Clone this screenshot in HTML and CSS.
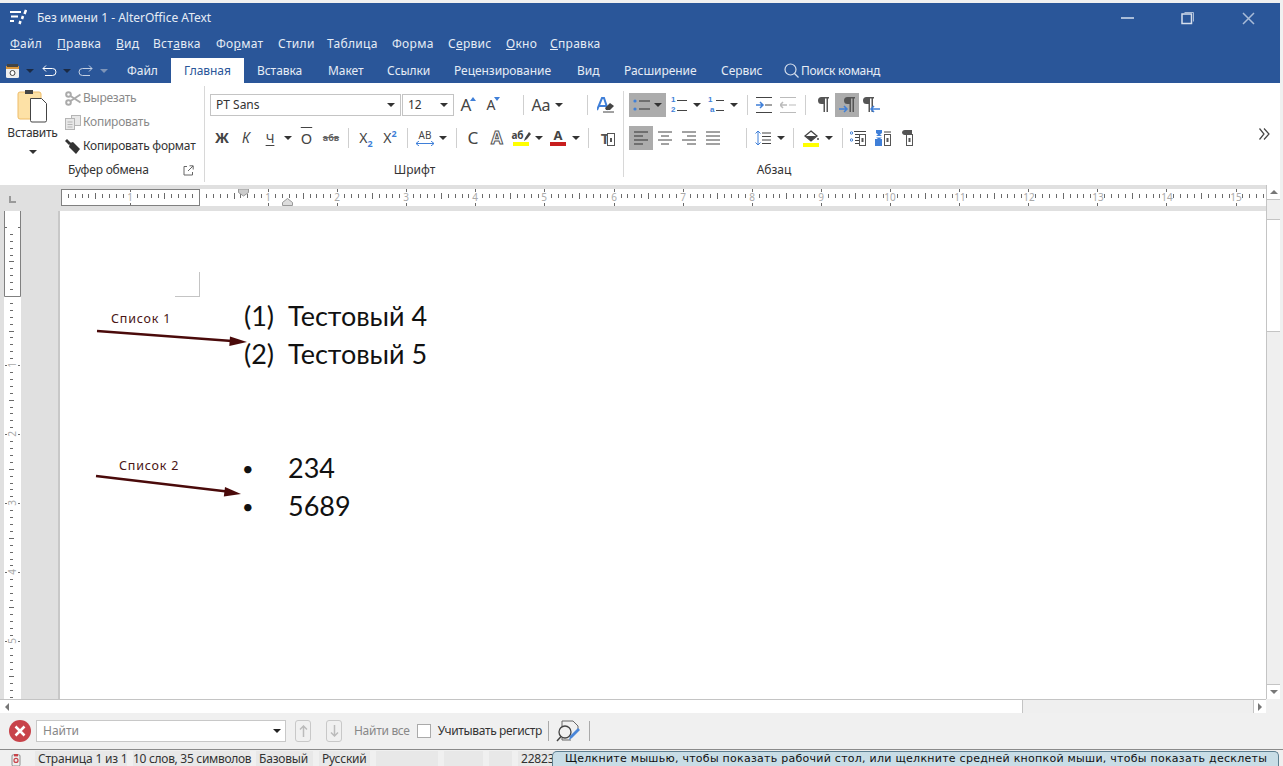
FILE: index.html
```html
<!DOCTYPE html>
<html lang="ru">
<head>
  <meta charset="UTF-8">
  <title>Без имени 1 - AlterOffice AText</title>
  <link rel="stylesheet" href="styles.css">
</head>
<body>
  <div class="titlebar">
    <svg class="logo" width="17" height="16" viewBox="0 0 17 16" fill="none" stroke="#fff" stroke-width="2">
      <path d="M0 3h11M1 7.500h7M0 12h4"/>
      <path d="M16 1l-1.500 4M13 7l-1 3M10.500 12l-1 3" stroke-width="2.500"/>
    </svg>
    <span class="doc-title">Без имени 1 - AlterOffice AText</span>
    <div class="win-buttons">
      <span class="win-btn"><svg width="14" height="4"><path d="M0 2h13" stroke="#a9bcd8" stroke-width="2"/></svg></span>
      <span class="win-btn"><svg width="14" height="14" fill="none" stroke="#d5deec"><rect x="1" y="3" width="9.500" height="9.500" stroke-width="1.500"/><path d="M3.500 1.500h9v9" stroke="#a9bcd8"/></svg></span>
      <span class="win-btn"><svg width="13" height="13" stroke="#a9bcd8" stroke-width="1.500"><path d="M1 1l11 11M12 1L1 12"/></svg></span>
    </div>
  </div>

  <div class="menubar">
    <span><u>Ф</u>айл</span>
    <span><u>П</u>равка</span>
    <span><u>В</u>ид</span>
    <span>Вст<u>а</u>вка</span>
    <span>Фо<u>р</u>мат</span>
    <span>Стили</span>
    <span>Таблица</span>
    <span>Форма</span>
    <span>С<u>е</u>рвис</span>
    <span><u>О</u>кно</span>
    <span><u>С</u>правка</span>
  </div>

  <div class="tabbar">
    <div class="quick">
      <svg width="13" height="14" viewBox="0 0 13 14"><rect x="0" y="2" width="13" height="12" rx="1.500" fill="#eee"/><rect x="0" y="2" width="13" height="3" fill="#d9963c"/><rect x="1" y="0" width="11" height="3" fill="#444"/><circle cx="6.500" cy="9" r="2.500" fill="#fff" stroke="#444"/></svg>
      <i class="caret dark"></i>
      <svg width="15" height="12" viewBox="0 0 15 12" fill="none" stroke="#fff"><path d="M1 3.500h9.500a3.500 3.500 0 0 1 0 7H3"/><path d="M4 .5l-3 3 3 3"/></svg>
      <i class="caret dark"></i>
      <svg width="15" height="12" viewBox="0 0 15 12" fill="none" stroke="#c3cfe2"><path d="M14 3.500H4.500a3.500 3.500 0 0 0 0 7H12"/><path d="M11 .5l3 3-3 3"/></svg>
      <i class="caret faded"></i>
    </div>
    <div class="tabs">
      <span class="tab">Файл</span>
      <span class="tab active">Главная</span>
      <span class="tab">Вставка</span>
      <span class="tab">Макет</span>
      <span class="tab">Ссылки</span>
      <span class="tab">Рецензирование</span>
      <span class="tab">Вид</span>
      <span class="tab">Расширение</span>
      <span class="tab">Сервис</span>
    </div>
    <div class="cmd-search">
      <svg width="15" height="15" viewBox="0 0 15 15" fill="none" stroke="#d5deec" stroke-width="1.200"><circle cx="6.500" cy="6.500" r="5.500"/><path d="M10.500 10.500l4 4"/></svg>
      <span>Поиск команд</span>
    </div>
  </div>

  <div class="ribbon">
    <section class="group clipboard">
      <div class="clip-tools">
        <div class="paste">
          <svg width="31" height="33" viewBox="0 0 31 33">
            <rect x="1" y="2" width="23" height="27" rx="2" fill="#fde1a6" stroke="#eebc68"/>
            <rect x="8" y="0" width="8" height="4" fill="#444"/>
            <path d="M13.500 8.500h11l5 5v17a1.500 1.500 0 0 1-1.500 1.500H15a1.500 1.500 0 0 1-1.500-1.500z" fill="#fff" stroke="#444"/>
          </svg>
          <span>Вставить</span>
          <i class="caret dark-on-light"></i>
        </div>
        <div class="clip-actions">
          <div class="clip-action off">
            <svg width="16" height="15" viewBox="0 0 16 15" fill="none" stroke="#aaa" stroke-width="2"><circle cx="3.500" cy="3.500" r="2.300"/><circle cx="3.500" cy="11.500" r="2.300"/><path d="M5.500 5l10 6.500M5.500 10l10-6.500"/></svg>
            <span>Вырезать</span>
          </div>
          <div class="clip-action off">
            <svg width="16" height="15" viewBox="0 0 16 15" fill="#e8e8e8" stroke="#b5b5b5"><rect x="6.500" y=".5" width="9" height="10"/><rect x=".5" y="3.500" width="9" height="11"/><path d="M2.500 7h5M2.500 9.500h5M2.500 12h5" fill="none"/></svg>
            <span>Копировать</span>
          </div>
          <div class="clip-action">
            <svg width="16" height="15" viewBox="0 0 16 15" fill="#333"><path d="M0 2l2-2 4 4-2 2z"/><path d="M5 4l3-1 7 7-4 5-7-7z"/></svg>
            <span>Копировать формат</span>
          </div>
        </div>
      </div>
      <div class="group-label clip-label">
        <span>Буфер обмена</span>
        <svg width="11" height="11" viewBox="0 0 11 11" fill="none" stroke="#666"><path d="M4 1.500H1v8.500h8.500V7"/><path d="M5 6l5-5M6.500 .8h3.700v3.700"/></svg>
      </div>
    </section>

    <section class="group font-group">
      <div class="row font-row-1">
        <div class="select"><span>PT Sans</span><i class="caret dark-on-light"></i></div>
        <div class="select size"><span>12</span><i class="caret dark-on-light"></i></div>
        <span class="glyph big">A<svg class="corner" width="6" height="4"><path d="M3 0l3 4H0z" fill="#3f7fd8"/></svg></span>
        <span class="glyph mid">A<svg class="corner" width="6" height="4"><path d="M3 4l3-4H0z" fill="#3f7fd8"/></svg></span>
        <span></span>
        <i class="sep"></i>
        <span class="glyph aa">Aa</span>
        <i class="caret dark-on-light"></i>
        <span></span>
        <i class="sep"></i>
        <svg width="17" height="16" viewBox="0 0 17 16"><path d="M0 13L5 1h2l4 12M2 9h7" fill="none" stroke="#3f7fd8" stroke-width="2"/><path d="M8 11l5-5 4 3-4 4H9z" fill="#444"/><path d="M6 15h11" stroke="#444"/></svg>
      </div>
      <div class="row font-row-2">
        <b class="glyph zh">Ж</b>
        <span class="glyph ital">К</span>
        <span class="glyph under">Ч</span>
        <i class="caret dark-on-light"></i>
        <span class="glyph over">О</span>
        <span class="glyph strike">абв</span>
        <i class="sep"></i>
        <span class="glyph xs">X<sub>2</sub></span>
        <span class="glyph xs">X<sup>2</sup></span>
        <i class="sep"></i>
        <span class="glyph ab-arrow">АВ<svg width="18" height="5" viewBox="0 0 18 5" fill="none" stroke="#3f7fd8"><path d="M0 2.500h18M3 0L0 2.500 3 5M15 0l3 2.500L15 5"/></svg></span>
        <i class="caret dark-on-light"></i>
        <i class="sep"></i>
        <span class="glyph big-c">С</span>
        <span class="glyph outline">A</span>
        <span class="glyph paint"><span class="paint-top">аб<svg width="7" height="9" viewBox="0 0 7 9"><path d="M0 9l1-3 4-6 2 2-4 5z" fill="#444"/></svg></span><i class="bar yellow"></i></span>
        <i class="caret dark-on-light"></i>
        <span class="glyph paint strong">A<i class="bar red"></i></span>
        <i class="caret dark-on-light"></i>
        <i class="sep"></i>
        <span class="glyph tc">T<svg width="8" height="13" viewBox="0 0 8 13" fill="#fff" stroke="#555"><rect x=".5" y=".5" width="7" height="12"/><rect x="3" y="5" width="2" height="4" fill="#555" stroke="none"/></svg></span>
      </div>
      <div class="group-label">Шрифт</div>
    </section>

    <section class="group para-group">
      <div class="row para-row-1">
        <div class="toggle on list-btn">
          <svg width="17" height="12" viewBox="0 0 17 12"><circle cx="2" cy="2" r="1.600" fill="#3f7fd8"/><circle cx="2" cy="10" r="1.600" fill="#3f7fd8"/><path d="M6 2h11M6 10h11" stroke="#333"/></svg>
          <i class="caret dark-on-light"></i>
        </div>
        <span class="numlist"><b>1</b><i></i><b>2</b><i></i></span>
        <i class="caret dark-on-light"></i>
        <span class="numlist multi"><b>1</b><i></i><b class="sub-level">a</b><i></i></span>
        <i class="caret dark-on-light"></i>
        <i class="sep"></i>
        <svg width="16" height="16" viewBox="0 0 16 16"><path d="M0 .5h16M9 8h7M0 15.500h16" stroke="#444"/><path d="M0 8h7M4 5l3 3-3 3" fill="none" stroke="#3f7fd8" stroke-width="1.500"/></svg>
        <span></span>
        <svg width="16" height="16" viewBox="0 0 16 16"><path d="M0 .5h16M9 8h7M0 15.500h16" stroke="#bbb"/><path d="M7 8H0M3 5L0 8l3 3" fill="none" stroke="#bbb" stroke-width="1.500"/></svg>
        <i class="sep"></i>
        <svg width="12" height="16" viewBox="0 0 12 16"><use href="#pilcrow"/></svg>
        <div class="toggle on">
          <svg width="17" height="16" viewBox="0 0 17 16"><use href="#pilcrow" x="5"/><path d="M0 12h8M5 9l3 3-3 3" fill="none" stroke="#3f7fd8" stroke-width="1.500"/></svg>
        </div>
        <svg width="17" height="16" viewBox="0 0 17 16"><use href="#pilcrow"/><path d="M17 12H8M11 9l-3 3 3 3" fill="none" stroke="#3f7fd8" stroke-width="1.500"/></svg>
      </div>
      <div class="row para-row-2">
        <div class="toggle on"><svg width="14" height="14" viewBox="0 0 14 14" stroke="#333"><path d="M0 1h14M0 5h9M0 9h14M0 13h9"/></svg></div>
        <svg width="14" height="14" viewBox="0 0 14 14" stroke="#444"><path d="M0 1h14M3 5h8M0 9h14M3 13h8"/></svg>
        <svg width="14" height="14" viewBox="0 0 14 14" stroke="#444"><path d="M0 1h14M5 5h9M0 9h14M5 13h9"/></svg>
        <svg width="14" height="14" viewBox="0 0 14 14" stroke="#444"><path d="M0 1h14M0 5h14M0 9h14M0 13h14"/></svg>
        <span></span>
        <i class="sep"></i>
        <svg width="16" height="16" viewBox="0 0 16 16" fill="none"><path d="M3 1v14M.5 3.500L3 1l2.500 2.500M.5 12.500L3 15l2.500-2.500" stroke="#3f7fd8"/><path d="M7 3h9M7 6.500h9M7 10h9M7 13.500h9" stroke="#444"/></svg>
        <i class="caret dark-on-light"></i>
        <i class="sep"></i>
        <span class="fill-icon">
          <svg width="16" height="12" viewBox="0 0 16 12"><path d="M8 1l6 5-6 5-6-5z" fill="#fff" stroke="#444" stroke-width="1.300"/><path d="M2.500 6h11L8 11z" fill="#444"/><circle cx="15" cy="9" r="1" fill="#444"/></svg>
          <i class="bar yellow"></i>
        </span>
        <i class="caret dark-on-light"></i>
        <i class="sep"></i>
        <svg width="16" height="15" viewBox="0 0 16 15"><circle cx="1.500" cy="2" r="1.200" fill="none" stroke="#3f7fd8"/><circle cx="1.500" cy="9" r="1.200" fill="none" stroke="#3f7fd8"/><path d="M4 .5h12M5 3.500h11M5 6.500h5M5 9.500h5M5 12.500h5" stroke="#444"/><use href="#minidoc" x="9" y="3"/></svg>
        <svg width="16" height="16" viewBox="0 0 16 16"><path d="M1 0h6v3L5 4.500 7 6H1l2-1.500L1 3zM0 9h7v7H0z" fill="#3f7fd8"/><path d="M1 7.500h6L5 9H3z" fill="#3f7fd8"/><path d="M9 2h7" stroke="#444"/><use href="#minidoc" x="9" y="4"/></svg>
        <svg width="12" height="16" viewBox="0 0 12 16"><path d="M0 3a3 3 0 0 1 3-3h7v5H3a3 3 0 0 1-3-2z" fill="#555"/><use href="#minidoc" x="4" y="4"/></svg>
      </div>
      <div class="group-label">Абзац</div>
    </section>

    <svg class="more" width="11" height="12" viewBox="0 0 11 12" fill="none" stroke="#444" stroke-width="1.200"><path d="M.5 .5L5 6 .5 11.500M5 .5L10 6l-5 5.500"/></svg>
  </div>

  <svg class="defs" width="0" height="0">
    <defs>
      <path id="pilcrow" d="M0 3.500A3.500 3.500 0 0 1 3.500 0H11v1.500h-1V15H8.500V1.500H7V15H5.500V7H3.500A3.500 3.500 0 0 1 0 3.500z" fill="#555"/>
      <g id="minidoc"><rect x=".5" y=".5" width="6" height="11" fill="#fff" stroke="#555"/><rect x="2.500" y="4" width="2" height="4" fill="#555"/></g>
    </defs>
  </svg>

  <div class="workspace">
    <div class="work-main">
      <div class="h-ruler-row">
        <div class="corner-box"><svg width="7" height="7"><path d="M1 0v6h6" fill="none" stroke="#9a9a9a" stroke-width="2"/></svg></div>
        <svg class="h-ruler" width="1205" height="17" viewBox="0 0 1205 17">
          <rect width="1205" height="17" fill="#fff"/>
          <path id="h-ticks" class="ticks"/>
          <rect x=".5" y=".5" width="138" height="16" fill="none" stroke="#808080"/>
          <g class="ruler-num">
            <text x="69" y="12">1</text><text x="207" y="12">1</text><text x="276" y="12">2</text><text x="345" y="12">3</text>
            <text x="414" y="12">4</text><text x="483" y="12">5</text><text x="553" y="12">6</text><text x="622" y="12">7</text>
            <text x="691" y="12">8</text><text x="760" y="12">9</text><text x="829" y="12">10</text><text x="899" y="12">11</text>
            <text x="968" y="12">12</text><text x="1037" y="12">13</text><text x="1106" y="12">14</text><text x="1175" y="12">15</text>
          </g>
          <path d="M177.500 0h10v3.500l-5 3.500-5-3.500z" fill="#ccc" stroke="#999"/>
          <path d="M221.500 16.500v-3l5-4 5 4v3z" fill="#ddd" stroke="#999"/>
        </svg>
      </div>
      <div class="doc-area">
        <div class="v-ruler-col">
          <svg width="17" height="488" viewBox="0 0 17 488">
            <rect width="17" height="488" fill="#fff"/>
            <path id="v-ticks" class="ticks"/>
            <path d="M.5 0v85.500h16V0" fill="none" stroke="#808080"/>
            <g class="ruler-num">
              <text transform="translate(12 154) rotate(-90)">1</text>
              <text transform="translate(12 223) rotate(-90)">2</text>
              <text transform="translate(12 292) rotate(-90)">3</text>
              <text transform="translate(12 361) rotate(-90)">4</text>
              <text transform="translate(12 430) rotate(-90)">5</text>
            </g>
          </svg>
        </div>
        <div class="page">
          <div class="margin-mark"></div>
          <svg class="arrows" width="200" height="300" viewBox="0 0 200 300">
            <path d="M37 120l135 10" stroke="#4a0a0a" stroke-width="2.500"/>
            <path d="M187 131l-17-5.500-.7 9.500z" fill="#4a0a0a"/>
            <path d="M36 265l131 15.500" stroke="#4a0a0a" stroke-width="2.500"/>
            <path d="M181 283l-16-7-1.200 9.500z" fill="#4a0a0a"/>
          </svg>
          <span class="note note-1">Список 1</span>
          <span class="note note-2">Список 2</span>
          <ul class="doc-list first">
            <li><span>(1)</span>Тестовый 4</li>
            <li><span>(2)</span>Тестовый 5</li>
          </ul>
          <ul class="doc-list">
            <li><span class="bullet">•</span>234</li>
            <li><span class="bullet">•</span>5689</li>
          </ul>
        </div>
      </div>
    </div>
    <div class="v-scroll">
      <div class="sb-btn"><i class="caret up"></i></div>
      <div class="sb-track short"></div>
      <div class="sb-thumb"></div>
      <div class="sb-track"></div>
      <div class="sb-btn"><i class="caret down"></i></div>
    </div>
  </div>

  <div class="h-scroll">
    <div class="hs-btn"><i class="tri left"></i></div>
    <div class="hs-thumb"></div>
    <div class="hs-track"></div>
    <div class="hs-btn end"><i class="tri right"></i></div>
  </div>

  <div class="findbar">
    <svg width="22" height="22" viewBox="0 0 22 22"><circle cx="11" cy="11" r="11" fill="#c8434a"/><path d="M6.500 6.500l9 9M15.500 6.500l-9 9" stroke="#fff" stroke-width="2.500"/></svg>
    <div class="find-input"><span>Найти</span><i class="caret dark-on-light"></i></div>
    <div class="find-arrow"><svg width="9" height="12" viewBox="0 0 9 12" fill="none" stroke="#bbb" stroke-width="1.500"><path d="M4.500 12V1M1 4.500L4.500 1 8 4.500"/></svg></div>
    <div class="find-arrow"><svg width="9" height="12" viewBox="0 0 9 12" fill="none" stroke="#bbb" stroke-width="1.500"><path d="M4.500 0v11M1 7.500L4.500 11 8 7.500"/></svg></div>
    <span class="find-all">Найти все</span>
    <span class="checkbox"></span>
    <span class="match-case">Учитывать регистр</span>
    <i class="find-sep"></i>
    <svg class="find-tool" width="25" height="24" viewBox="0 0 25 24" fill="none"><path d="M6 8V2h11l5 5v3M6 19v2h9" stroke="#666"/><circle cx="9" cy="13" r="6" stroke="#444" stroke-width="1.300"/><path d="M5 17.500L1 22" stroke="#444" stroke-width="1.500"/><path d="M13 21l1-4 8-8 2 2-8 8z" fill="#4a86d8"/></svg>
    <i class="find-sep"></i>
  </div>

  <div class="statusbar">
    <span class="st-icon"><svg width="10" height="12" viewBox="0 0 11 15"><rect x=".5" y="1" width="10" height="14" rx="1.500" fill="#eee" stroke="#777"/><rect x="3" y="0" width="5" height="3" fill="#c8434a"/><circle cx="5.500" cy="8" r="2.500" fill="none" stroke="#c8434a" stroke-width="1.500"/></svg></span>
    <span class="cell page-no">Страница 1 из 1</span>
    <span class="cell words">10 слов, 35 символов</span>
    <span class="cell style-name">Базовый</span>
    <span class="cell lang">Русский</span>
    <span class="cell empty-a"></span>
    <span class="cell empty-b"></span>
    <span class="cell empty-c"></span>
    <span class="cell number">22823</span>
    <div class="tooltip">Щелкните мышью, чтобы показать рабочий стол, или щелкните средней кнопкой мыши, чтобы показать десклеты</div>
  </div>

  <script src="ruler.js"></script>
</body>
</html>
```

FILE: styles.css
```css
* {
  box-sizing: border-box;
}

html, body {
  height: 100%;
}

body {
  margin: 0;
  padding-top: 3px;
  width: 1283px;
  height: 766px;
  overflow: hidden;
  background: #f0f0f0;
  color: #333;
  font-family: "Noto Sans", sans-serif;
  font-size: 12px;
  line-height: 16px;
  display: flex;
  flex-direction: column;
}

i { font-style: normal; }
svg { display: block; flex: none; }
.defs { position: absolute; }

/* blue window chrome */
.titlebar {
  width: 1280px;
  height: 30px;
  flex: none;
  background: #2a5699;
  color: #e6ecf5;
  display: flex;
  align-items: center;
  padding: 0 2px 0 10px;
}

.doc-title { margin-left: 10px; }
.logo { margin-top: -2px; }

.win-buttons {
  margin-left: auto;
  display: flex;
  align-self: stretch;
}

.win-btn {
  width: 60px;
  display: flex;
  justify-content: center;
  align-items: center;
}

.menubar {
  width: 1280px;
  height: 25px;
  flex: none;
  background: #2a5699;
  color: #e6ecf5;
  padding: 3px 0 0 10px;
  display: grid;
  grid-template-columns: 47px 59px 37px 63px 62px 49px 65px 56px 58px 44px auto;
  letter-spacing: .3px;
}

.tabbar {
  width: 1280px;
  height: 25px;
  flex: none;
  background: #2a5699;
  color: #e6ecf5;
  display: flex;
}

.quick {
  display: grid;
  grid-template-columns: 24px 12px 26px 10px 26px 12px;
  width: 114px;
  justify-items: center;
  align-items: center;
}

.tabs {
  display: grid;
  grid-template-columns: 57px 73px 71px 59px 67px 123px 47px 97px 63px;
}

.tab {
  padding-left: 13px;
  line-height: 25px;
  letter-spacing: -.05px;
}

.tab.active {
  background: #fff;
  color: #2a5699;
}

.cmd-search {
  margin-left: 13px;
  display: flex;
  align-items: center;
  gap: 2px;
  letter-spacing: -.3px;
}

/* carets */
.caret {
  width: 0;
  height: 0;
  border-left: 4px solid transparent;
  border-right: 4px solid transparent;
  border-top: 4px solid #333;
}

.caret.dark { border-top-color: #1b2a44; }
.caret.faded { border-top-color: #7d94b8; }

/* ribbon */
.ribbon {
  width: 1280px;
  height: 102px;
  flex: none;
  background: #fff;
  display: flex;
}

.group {
  position: relative;
  display: flex;
  flex-direction: column;
}

.group-label {
  margin-top: auto;
  height: 22px;
  text-align: center;
  line-height: 22px;
}

.clipboard {
  width: 205px;
  border-right: 1px solid #d8d8d8;
  margin: 3px 0;
}

.clip-tools {
  display: flex;
}

.paste {
  width: 65px;
  display: flex;
  flex-direction: column;
  align-items: center;
  padding-top: 4px;
  letter-spacing: -.25px;
}

.paste span { margin-top: 2px; }
.paste .caret { margin-top: 9px; }

.clip-action {
  height: 24px;
  display: flex;
  align-items: center;
  gap: 2px;
  white-space: nowrap;
  letter-spacing: -.25px;
}

.clip-action.off { color: #8a8a8a; }

.clip-label {
  display: flex;
  justify-content: space-between;
  align-items: center;
  height: 27px;
  padding: 0 10px 0 68px;
  letter-spacing: -.2px;
}

.font-group {
  width: 419px;
  padding: 10px 0 0 5px;
}

.font-group::after {
  content: "";
  position: absolute;
  right: 0;
  top: 8px;
  bottom: 8px;
  width: 1px;
  background: #d8d8d8;
}

.para-group {
  width: 300px;
  padding: 10px 0 0 5px;
}

.font-group .group-label,
.para-group .group-label {
  margin-left: -5px;
  margin-bottom: 4px;
}

.row {
  display: grid;
  height: 24px;
  justify-items: center;
  align-items: center;
  color: #444;
}

.font-row-1 { grid-template-columns: 191px 53px 24px 26px 15px 8px 28px 8px 20px 8px 28px; }
.font-row-2 {
  margin-top: 9px;
  grid-template-columns: 24px 24px 24px 12px 25px 24px 10px 26px 22px 12px 24px 12px 14px 20px 28px 20px 16px 22px 14px 10px 30px;
}
.para-row-1 { grid-template-columns: 37px 26px 10px 28px 8px 18px 16px 7px 18px 16px 22px 24px 24px; }
.para-row-2 {
  margin-top: 9px;
  grid-template-columns: 24px 24px 24px 24px 17px 8px 26px 10px 14px 22px 14px 12px 20px 30px 20px;
}

.sep {
  width: 1px;
  height: 20px;
  background: #cfcfcf;
}

.select {
  width: 100%;
  height: 22px;
  border: 1px solid #c4c4c4;
  display: flex;
  align-items: center;
  justify-content: space-between;
  padding: 0 5px;
  color: #333;
}

.select.size { margin-left: 1px; width: 52px; }

.toggle {
  width: 24px;
  height: 24px;
  display: flex;
  align-items: center;
  justify-content: center;
}

.toggle.on { background: #acacac; }
.list-btn { width: 37px; gap: 4px; }

.numlist {
  width: 16px;
  display: grid;
  grid-template-columns: 6px 10px;
  grid-auto-rows: 10px;
  align-items: center;
  font-family: "Liberation Sans", sans-serif;
  font-size: 8px;
  line-height: 10px;
  color: #3f7fd8;
}

.numlist b { font-weight: bold; }
.numlist i { height: 1px; background: #444; }
.numlist.multi i { margin-left: 2px; }
.sub-level { padding-left: 2px; }

.glyph {
  position: relative;
  font-size: 13px;
  line-height: 20px;
}

.glyph sub, .glyph sup {
  font-size: 9px;
  color: #3f7fd8;
  font-weight: bold;
  line-height: 0;
}

.glyph.big { font-size: 17px; }
.glyph.mid { font-size: 14px; }
.glyph.aa { font-size: 16px; }
.glyph.big-c { font-size: 17px; }
.glyph.zh { font-size: 14px; }
.glyph.ital { font-style: italic; font-size: 14px; }
.glyph.xs { font-size: 14px; }

.corner {
  position: absolute;
  top: 2px;
  right: -5px;
}

.under { text-decoration: underline; text-underline-offset: 2px; }
.over { text-decoration: overline; font-size: 15px; }
.strike { text-decoration: line-through; font-size: 9px; font-weight: bold; color: #666; }

.ab-arrow {
  font-size: 10px;
  line-height: 11px;
  display: flex;
  flex-direction: column;
  align-items: center;
}

.outline {
  font-size: 17px;
  color: #fff;
  font-weight: bold;
  -webkit-text-stroke: 1px #555;
}

.paint {
  font-size: 10px;
  font-weight: bold;
  line-height: 11px;
  display: flex;
  flex-direction: column;
  align-items: center;
  width: 16px;
}

.paint-top {
  display: flex;
  align-items: flex-end;
}

.paint.strong { font-size: 13px; }

.bar {
  display: block;
  width: 16px;
  height: 4px;
  margin-top: 1px;
}

.bar.yellow { background: #ffff00; }
.bar.red { background: #c81e1e; }

.fill-icon {
  display: flex;
  flex-direction: column;
  align-items: center;
}

.tc {
  display: flex;
  align-items: flex-end;
  font-size: 15px;
  font-weight: bold;
  color: #555;
  line-height: 16px;
}

.tc svg { margin-left: -2px; }

.more {
  margin: 45px 0 0 335px;
}

/* ruler + page */
.workspace {
  width: 1280px;
  height: 514px;
  flex: none;
  display: flex;
}

.work-main {
  width: 1266px;
  display: flex;
  flex-direction: column;
}

.h-ruler-row {
  height: 26px;
  flex: none;
  padding-top: 4px;
  background: #e0e0e0;
  display: flex;
}

.corner-box {
  width: 61px;
  padding: 7px 0 0 9px;
}

.ticks {
  fill: none;
  stroke: #6a6a6a;
  shape-rendering: crispEdges;
}

.ruler-num text {
  font-size: 10px;
  fill: #aaa;
  text-anchor: middle;
}

.doc-area {
  flex: 1;
  display: flex;
  min-height: 0;
}

.v-ruler-col {
  width: 60px;
  flex: none;
  padding-left: 4px;
  background: #e0e0e0;
  border-right: 2px solid #c8c8c8;
}

.page {
  flex: 1;
  position: relative;
  background: #fff;
  padding: 86px 0 0 184px;
  font-family: "Lato", "Noto Sans", sans-serif;
  font-size: 27px;
  line-height: 38px;
  color: #111;
}

.margin-mark {
  position: absolute;
  left: 115px;
  top: 61px;
  width: 25px;
  height: 25px;
  border-right: 1px solid #c4c4c4;
  border-bottom: 1px solid #c4c4c4;
}

.arrows {
  position: absolute;
  left: 0;
  top: 0;
}

.note {
  position: absolute;
  font-family: "Noto Sans", sans-serif;
  font-size: 12.500px;
  line-height: 16px;
  letter-spacing: .8px;
  color: #4a1515;
}

.note-1 { left: 51px; top: 100px; }
.note-2 { left: 59px; top: 247px; }

.doc-list {
  list-style: none;
  margin: 0 0 76px;
  padding: 0;
}

.doc-list li {
  display: flex;
  height: 38px;
}

.doc-list li span { width: 44px; }
.doc-list li .bullet { font-size: 20px; margin-left: -2px; margin-right: 2px; }

/* scrollbars */
.v-scroll {
  width: 14px;
  display: flex;
  flex-direction: column;
  border-left: 1px solid #c4c4c4;
}

.sb-btn {
  height: 14px;
  flex: none;
  background: #fff;
  display: flex;
  align-items: center;
  justify-content: center;
}

.caret.up {
  border-top: 0;
  border-bottom: 4px solid #777;
}

.caret.down { border-top-color: #777; }

.sb-track {
  flex: 1;
  background: #efefef;
  border-bottom: 1px solid #c4c4c4;
}

.sb-track.short {
  flex: none;
  height: 21px;
  border-top: 1px solid #c4c4c4;
}

.sb-thumb {
  height: 112px;
  flex: none;
  background: #fff;
  border-bottom: 1px solid #c4c4c4;
}

.h-scroll {
  width: 1266px;
  height: 14px;
  flex: none;
  display: flex;
  border-top: 1px solid #c4c4c4;
}

.hs-btn {
  width: 13px;
  flex: none;
  background: #fff;
  display: flex;
  align-items: center;
  justify-content: center;
}

.hs-thumb {
  width: 1009px;
  background: #fff;
}

.hs-track {
  flex: 1;
  background: #efefef;
  border-left: 1px solid #c4c4c4;
}

.hs-btn.end {
  border-left: 1px solid #c4c4c4;
}

.tri {
  width: 0;
  height: 0;
  border-top: 4px solid transparent;
  border-bottom: 4px solid transparent;
}

.tri.left { border-right: 4px solid #777; }
.tri.right { border-left: 4px solid #777; }

/* find toolbar */
.findbar {
  height: 36px;
  flex: none;
  display: flex;
  align-items: center;
  padding-left: 9px;
  color: #333;
}

.find-input {
  width: 250px;
  height: 22px;
  margin-left: 5px;
  background: #fff;
  border: 1px solid #c8c8c8;
  display: flex;
  align-items: center;
  justify-content: space-between;
  padding: 0 4px 0 6px;
  color: #888;
}

.find-input .caret { border-top-color: #222; }

.find-arrow {
  width: 16px;
  height: 22px;
  margin-left: 9px;
  border: 1px solid #c8c8c8;
  border-radius: 3px;
  display: flex;
  align-items: center;
  justify-content: center;
}

.find-arrow + .find-arrow { margin-left: 15px; }

.find-all {
  margin-left: 12px;
  color: #888;
  letter-spacing: -.3px;
}

.checkbox {
  width: 14px;
  height: 14px;
  margin-left: 7px;
  background: #fff;
  border: 1px solid #aaa;
}

.match-case {
  margin-left: 7px;
  letter-spacing: -.35px;
}

.find-sep {
  width: 1px;
  height: 20px;
  margin-left: 6px;
  background: #aaa;
}

.find-tool { margin-left: 7px; }
.find-tool + .find-sep { margin-left: 8px; }

/* status bar */
.statusbar {
  flex: 1;
  position: relative;
  border-top: 1px solid #8a8a8a;
  padding-top: 1px;
  display: flex;
}

.st-icon { padding-left: 11px; width: 35px; padding-top: 3px; }

.cell {
  background: #e8e8e8;
  white-space: nowrap;
  margin-right: 6px;
  height: 15px;
  padding-top: 1px;
  line-height: 14px;
  letter-spacing: -.2px;
}

.page-no { width: 92px; padding-left: 3px; margin-right: 6px; }
.words { width: 117px; letter-spacing: -.3px; }
.style-name { width: 57px; padding-left: 3px; }
.lang { width: 51px; padding-left: 3px; }
.empty-a { width: 62px; }
.empty-b { width: 39px; }
.empty-c { width: 23px; }
.number { width: 40px; padding-left: 3px; }

.tooltip {
  position: absolute;
  left: 552px;
  top: 1px;
  width: 727px;
  height: 15px;
  padding-left: 12px;
  background: #c8dde6;
  border: 1px solid #5d7f90;
  border-bottom: 0;
  border-radius: 5px 5px 0 0;
  font-family: "DejaVu Sans", sans-serif;
  font-size: 11px;
  line-height: 14px;
  letter-spacing: .26px;
  color: #111;
  white-space: nowrap;
}
```

FILE: ruler.js
```js
// ruler ticks: 69.1px per unit, ten ticks to a unit
var UNIT = 69.1;

function horizontalTicks() {
  var d = '';
  for (var i = -20; i < 170; i++) {
    var x = Math.round(138 + i * UNIT / 10) + 0.5;
    if (x < 0) continue;
    if (i % 10 === 0) d += 'M' + x + ' 0v3M' + x + ' 14v3';
    else if (i % 5 === 0) d += 'M' + x + ' 4v6';
    else d += 'M' + x + ' 5v4';
  }
  return d;
}

function verticalTicks() {
  var d = '';
  for (var i = -10; i < 60; i++) {
    var y = Math.round(85 + i * UNIT / 10) + 0.5;
    if (y < 0) continue;
    if (i % 10 === 0) d += 'M1 ' + y + 'h2M14 ' + y + 'h2';
    else if (i % 5 === 0) d += 'M5 ' + y + 'h5';
    else d += 'M6 ' + y + 'h3';
  }
  return d;
}

document.getElementById('h-ticks').setAttribute('d', horizontalTicks());
document.getElementById('v-ticks').setAttribute('d', verticalTicks());
```
